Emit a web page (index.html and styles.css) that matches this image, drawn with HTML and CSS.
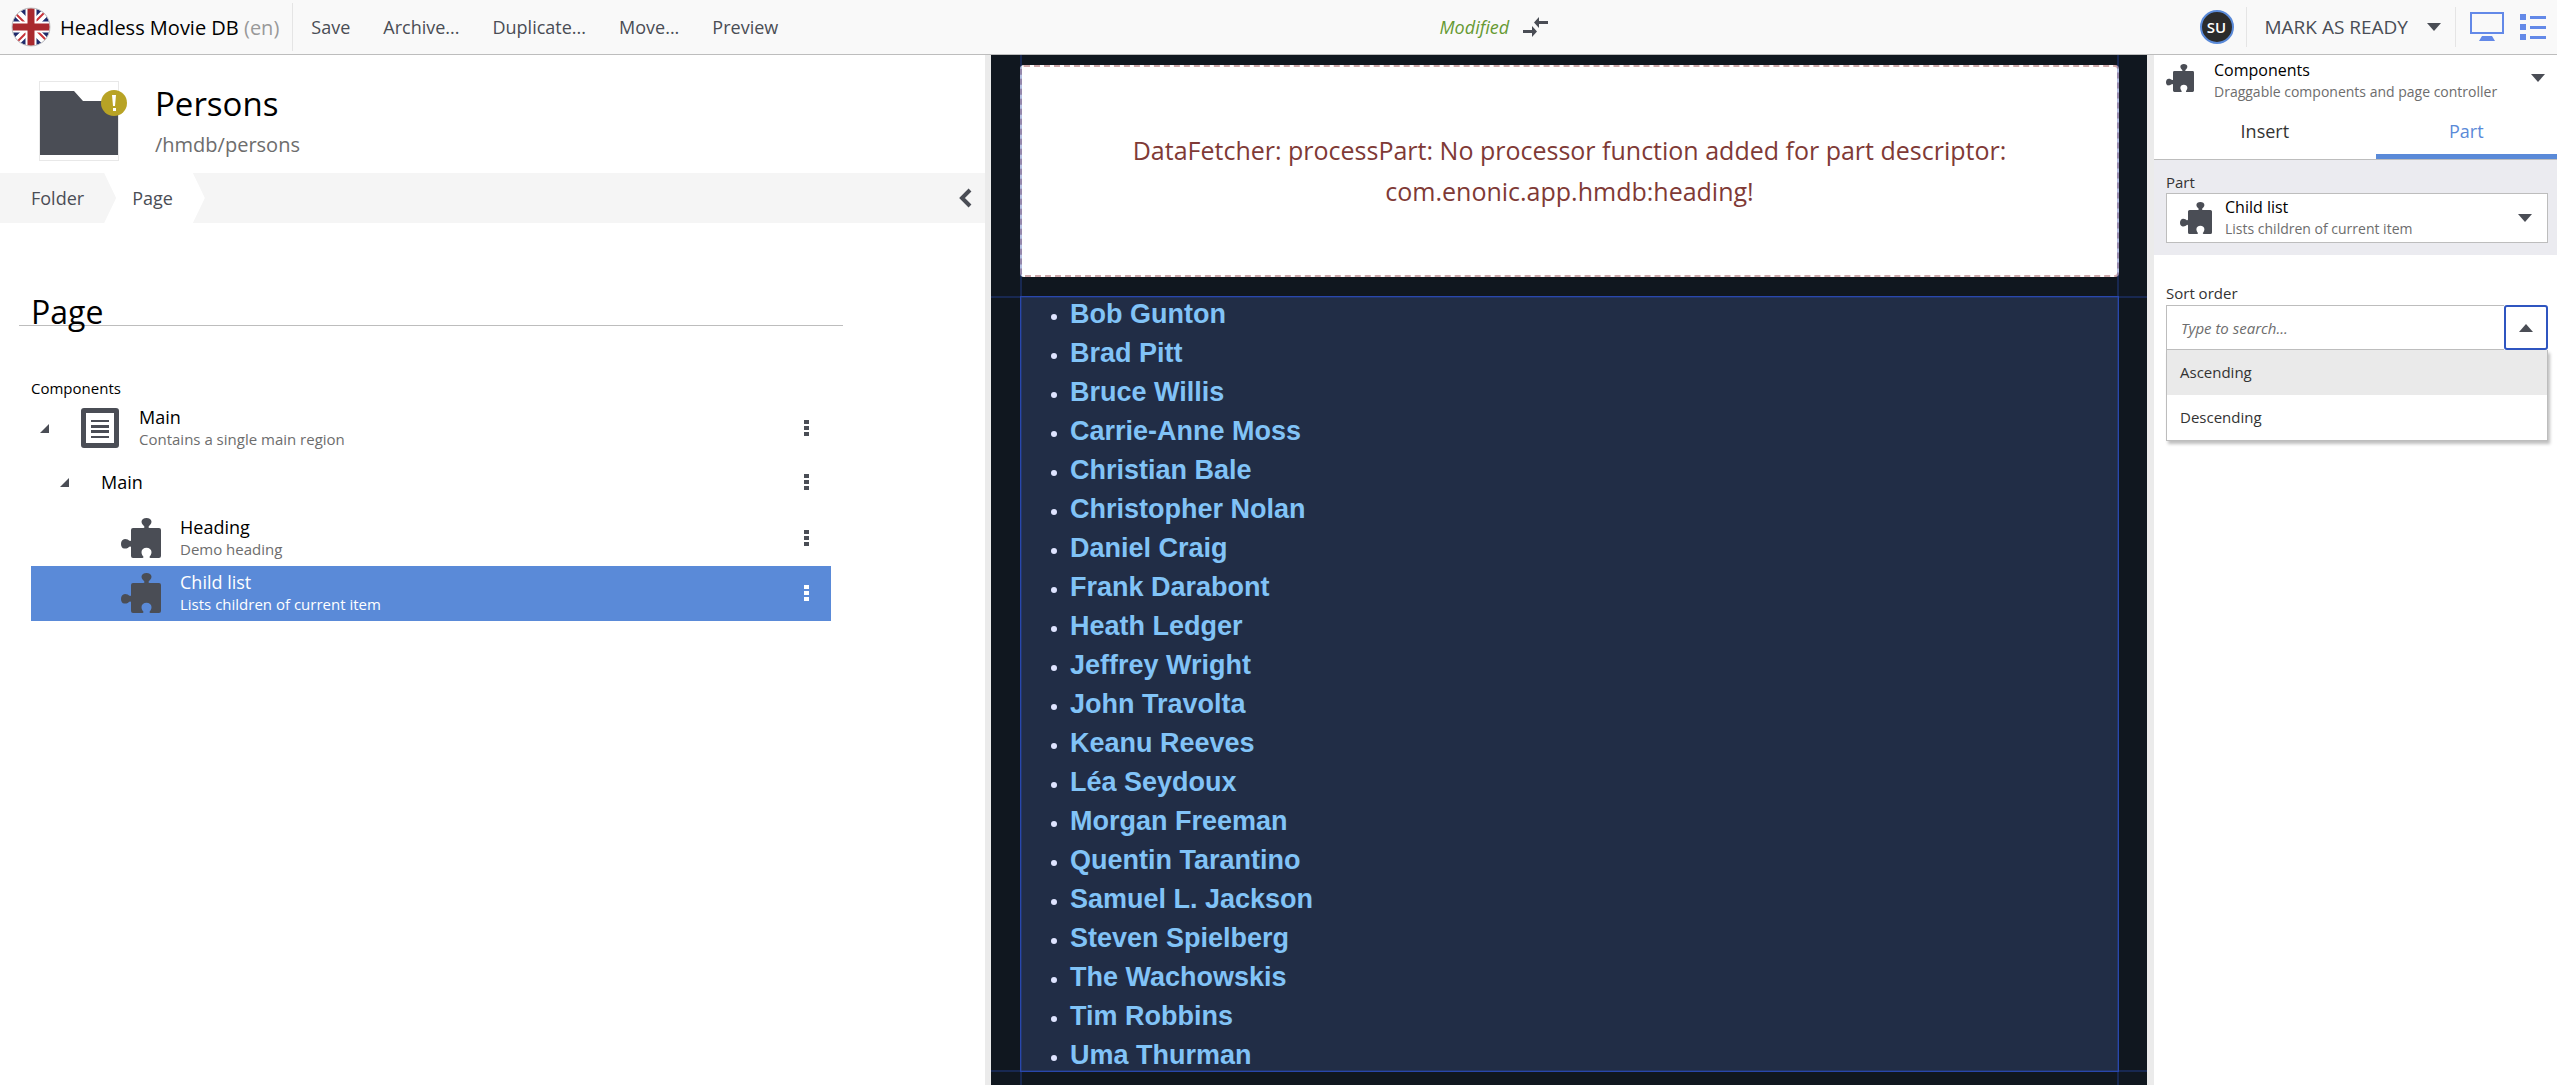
FILE: index.html
```html
<!DOCTYPE html>
<html lang="en">
<head>
<meta charset="utf-8">
<meta name="viewport" content="width=device-width, initial-scale=1">
<title>Persons - Headless Movie DB</title>
<link rel="stylesheet" href="styles.css">
</head>
<body>
<svg class="sprite" aria-hidden="true">
  <symbol id="puzzle" viewBox="0 0 40 40">
    <path d="M12 10h10.500c.8 0 1.200-.8.8-1.500C22.500 7.500 20.500 6 20.500 3.800 20.500 1.500 22.700 0 25.500 0s5 1.500 5 3.800c0 2.200-2 3.700-2.800 4.700-.4.7 0 1.500.8 1.500H38a2 2 0 0 1 2 2v26a2 2 0 0 1-2 2h-8.500c-.8 0-1.200-.8-.8-1.500.8-1 1.800-2.500 1.800-4.500 0-2.600-2.200-4.200-5-4.200s-5 1.600-5 4.200c0 2 1 3.500 1.800 4.500.4.7 0 1.500-.8 1.500H12a2 2 0 0 1-2-2v-8.500c0-.8-.8-1.200-1.500-.8-1 .8-2.300 1.800-4.500 1.800C1.500 31 0 28.800 0 26s1.500-5 4-5c2.200 0 3.500 1 4.500 1.800.7.4 1.500 0 1.500-.8V12a2 2 0 0 1 2-2z"/>
  </symbol>
  <symbol id="caret" viewBox="0 0 14 8"><path d="M0 0h14L7 8z"/></symbol>
  <symbol id="dots" viewBox="0 0 5 16"><path d="M0 0h5v4H0zM0 6h5v4H0zM0 12h5v4H0z"/></symbol>
  <symbol id="toggle" viewBox="0 0 9 9"><path d="M9 0v9H0z"/></symbol>
</svg>

<header class="toolbar">
  <a class="brand" href="#">
    <svg class="flag" viewBox="0 0 40 40" aria-hidden="true">
      <defs><clipPath id="disc"><circle cx="20" cy="20" r="19"/></clipPath></defs>
      <g clip-path="url(#disc)">
        <path fill="#1f2a6b" d="M0 0h40v40H0z"/>
        <path stroke="#fff" stroke-width="8" d="M2 2l36 36M38 2L2 38"/>
        <path stroke="#c8343a" stroke-width="2" d="M4 6l12 12M36 34L24 22M35 4L22 17M5 36l13-13"/>
        <path stroke="#fff" stroke-width="11" d="M20 0v40M0 20h40"/>
        <path stroke="#a9292e" stroke-width="7" d="M20 0v40M0 20h40"/>
      </g>
      <circle cx="20" cy="20" r="19" fill="none" stroke="#c4c4c4"/>
    </svg>
    <span>Headless Movie DB <span class="lang">(en)</span></span>
  </a>
  <nav class="actions">
    <button>Save</button>
    <button>Archive...</button>
    <button>Duplicate...</button>
    <button>Move...</button>
    <button>Preview</button>
  </nav>
  <div class="status">
    <span>Modified</span>
    <button aria-label="Compare versions">
      <svg width="25" height="20" viewBox="0 0 25 20"><path d="M0 13h9V9l5 5.500L9 20v-4H0zM25 4h-9V0l-5 5.500 5 5.500V7h9z"/></svg>
    </button>
  </div>
  <div class="avatar">SU</div>
  <div class="publish">
    <button>MARK AS READY</button>
    <button aria-label="More publish actions"><svg class="caret"><use href="#caret"/></svg></button>
  </div>
  <div class="views">
    <button aria-label="Desktop preview">
      <svg width="34" height="30" viewBox="0 0 34 30"><path fill-rule="evenodd" d="M0 0h34v22H0zM2 2v18h30V2zM12 24h10l3 5H9z"/></svg>
    </button>
    <button aria-label="Components view">
      <svg width="26" height="26" viewBox="0 0 26 26"><path d="M0 0h6v6H0zM0 10h6v6H0zM0 20h6v6H0zM10 2h16v3H10zM10 12h16v3H10zM10 22h16v3H10z"/></svg>
    </button>
  </div>
</header>

<main class="workspace">
  <section class="editor">
    <div class="content-head">
      <div class="thumb">
        <svg viewBox="0 0 78 78" aria-hidden="true"><path d="M0 9h34l9 10h35v54H0z"/></svg>
        <span class="alert">
          <svg viewBox="0 0 26 26" aria-hidden="true"><circle cx="13" cy="13" r="13" fill="#b8a325"/><path fill="#fff" d="M11 5h4l-1 11h-2zM12 18h3v3h-3z"/></svg>
        </span>
      </div>
      <div>
        <h1>Persons</h1>
        <p class="path">/hmdb/persons</p>
      </div>
    </div>
    <nav class="steps">
      <a class="step" href="#">Folder</a>
      <a class="step current" href="#">Page</a>
      <button class="collapse" aria-label="Collapse panel">
        <svg width="13" height="20" viewBox="0 0 13 20"><path d="M11 2l-8 8 8 8" fill="none" stroke="#4a4d55" stroke-width="4"/></svg>
      </button>
    </nav>
    <div class="form">
      <h2>Page</h2>
      <h3>Components</h3>
      <ul class="tree">
        <li class="row level-1">
          <button class="toggle" aria-label="Collapse Main"><svg><use href="#toggle"/></svg></button>
          <svg class="icon" viewBox="0 0 40 40" aria-hidden="true"><path fill-rule="evenodd" d="M4 0h32a3 3 0 0 1 3 3v34a3 3 0 0 1-3 3H4a3 3 0 0 1-3-3V3a3 3 0 0 1 3-3zM6 5v30h28V5zM11 12h18v2H11zM11 17h18v3H11zM11 22h18v3H11zM11 28h18v2H11z"/></svg>
          <div class="label"><strong>Main</strong><small>Contains a single main region</small></div>
          <button class="menu" aria-label="Main menu"><svg><use href="#dots"/></svg></button>
        </li>
        <li class="row level-2">
          <button class="toggle" aria-label="Collapse Main region"><svg><use href="#toggle"/></svg></button>
          <div class="label"><strong>Main</strong></div>
          <button class="menu" aria-label="Main region menu"><svg><use href="#dots"/></svg></button>
        </li>
        <li class="row level-3">
          <svg class="icon" aria-hidden="true"><use href="#puzzle"/></svg>
          <div class="label"><strong>Heading</strong><small>Demo heading</small></div>
          <button class="menu" aria-label="Heading menu"><svg><use href="#dots"/></svg></button>
        </li>
        <li class="row level-3 selected">
          <svg class="icon" aria-hidden="true"><use href="#puzzle"/></svg>
          <div class="label"><strong>Child list</strong><small>Lists children of current item</small></div>
          <button class="menu" aria-label="Child list menu"><svg><use href="#dots"/></svg></button>
        </li>
      </ul>
    </div>
  </section>

  <div class="splitter"></div>

  <section class="preview">
    <div class="error">DataFetcher: processPart: No processor function added for part descriptor:<br>com.enonic.app.hmdb:heading!</div>
    <div class="child-list">
      <ul>
        <li><a href="#">Bob Gunton</a></li>
        <li><a href="#">Brad Pitt</a></li>
        <li><a href="#">Bruce Willis</a></li>
        <li><a href="#">Carrie-Anne Moss</a></li>
        <li><a href="#">Christian Bale</a></li>
        <li><a href="#">Christopher Nolan</a></li>
        <li><a href="#">Daniel Craig</a></li>
        <li><a href="#">Frank Darabont</a></li>
        <li><a href="#">Heath Ledger</a></li>
        <li><a href="#">Jeffrey Wright</a></li>
        <li><a href="#">John Travolta</a></li>
        <li><a href="#">Keanu Reeves</a></li>
        <li><a href="#">Léa Seydoux</a></li>
        <li><a href="#">Morgan Freeman</a></li>
        <li><a href="#">Quentin Tarantino</a></li>
        <li><a href="#">Samuel L. Jackson</a></li>
        <li><a href="#">Steven Spielberg</a></li>
        <li><a href="#">The Wachowskis</a></li>
        <li><a href="#">Tim Robbins</a></li>
        <li><a href="#">Uma Thurman</a></li>
      </ul>
    </div>
  </section>

  <div class="splitter"></div>

  <aside class="inspector">
    <button class="widget">
      <svg class="widget-icon" aria-hidden="true"><use href="#puzzle"/></svg>
      <span class="label"><strong>Components</strong><small>Draggable components and page controller</small></span>
      <svg class="caret"><use href="#caret"/></svg>
    </button>
    <div class="tabs" role="tablist">
      <button role="tab" class="tab-insert">Insert</button>
      <button role="tab" class="tab-part" aria-selected="true">Part</button>
    </div>
    <div class="part-field">
      <label for="part">Part</label>
      <button class="part-select" id="part">
        <svg class="part-icon" aria-hidden="true"><use href="#puzzle"/></svg>
        <span class="label"><strong>Child list</strong><small>Lists children of current item</small></span>
        <svg class="caret"><use href="#caret"/></svg>
      </button>
    </div>
    <div class="sort-field">
      <label for="sort">Sort order</label>
      <div class="combo">
        <input id="sort" type="text" placeholder="Type to search...">
        <button aria-label="Close options" aria-expanded="true"><svg class="caret up"><use href="#caret"/></svg></button>
      </div>
      <ul class="options" role="listbox">
        <li role="option" class="active">Ascending</li>
        <li role="option">Descending</li>
      </ul>
    </div>
  </aside>
</main>
</body>
</html>
```
FILE: styles.css
```css
* {
  box-sizing: border-box;
}

body {
  margin: 0;
  min-height: 100vh;
  display: flex;
  flex-direction: column;
  background: #fff;
  color: #000;
  font-family: "Open Sans", "Noto Sans", sans-serif;
  font-size: 18px;
}

h1, h2, h3, p, ul {
  margin: 0;
  padding: 0;
  font-weight: 400;
}

ul {
  list-style: none;
}

a {
  color: inherit;
  text-decoration: none;
}

button {
  margin: 0;
  padding: 0;
  border: 0;
  background: none;
  color: inherit;
  font: inherit;
}

svg {
  display: block;
  flex: none;
  fill: #4a4d55;
}

.sprite {
  position: absolute;
  width: 0;
  height: 0;
}

.caret {
  width: 14px;
  height: 8px;
}

.caret.up {
  rotate: 180deg;
}

.label {
  display: flex;
  flex-direction: column;
  flex: 1;
  text-align: left;
}

.label strong {
  font-weight: 400;
}

.label small {
  color: #6d6d6d;
}

/* Top toolbar */

.toolbar {
  display: flex;
  align-items: center;
  height: 55px;
  padding: 0 11px;
  border-bottom: 1px solid #bdbdbd;
  background: #f9f9f9;
  color: #4a4d55;
}

.brand {
  display: flex;
  align-items: center;
  gap: 9px;
  height: 48px;
  padding-right: 13px;
  border-right: 1px solid #e5e5e5;
  color: #000;
  font-size: 20px;
}

.flag {
  width: 40px;
  height: 40px;
}

.lang {
  color: #999;
}

.actions {
  display: flex;
  gap: 33px;
  padding: 0 10px 0 18px;
}

.status {
  display: flex;
  align-items: center;
  gap: 14px;
  margin: 0 auto;
  color: #669933;
  font-style: italic;
}

.avatar {
  display: grid;
  place-items: center;
  width: 34px;
  height: 34px;
  border: 2px solid #5a8ad8;
  border-radius: 50%;
  background: #2b2b2b;
  color: #fff;
  font-size: 15px;
  font-weight: 600;
}

.publish {
  display: flex;
  align-items: center;
  gap: 19px;
  height: 40px;
  margin-left: 12px;
  padding: 0 14px 0 18px;
  border: solid #e5e5e5;
  border-width: 0 1px;
  font-size: 19px;
}

.views {
  display: flex;
  align-items: center;
  gap: 16px;
  padding-left: 14px;
}

.views svg {
  fill: #6389e8;
}

/* Workspace columns */

.workspace {
  flex: 1;
  display: grid;
  grid-template-columns: minmax(0, 985fr) 6px minmax(0, 1156fr) 7px minmax(0, 403fr);
}

.splitter {
  background: #ebebeb;
}

/* Content editor */

.content-head {
  display: flex;
  gap: 36px;
  padding: 26px 39px 12px;
}

.thumb {
  position: relative;
  width: 80px;
  height: 80px;
  border: 1px solid #e8e8e8;
}

.alert {
  position: absolute;
  top: 8px;
  right: -9px;
  width: 26px;
}

h1 {
  padding-top: 6px;
  font-size: 33px;
  line-height: 34px;
}

.path {
  padding-top: 8px;
  color: #6d6d6d;
  font-size: 20px;
  line-height: 32px;
}

.steps {
  display: flex;
  height: 50px;
  background: #f5f5f5;
  color: #4a4d55;
  line-height: 50px;
}

.step {
  padding: 0 32px 0 31px;
}

.step.current {
  padding: 0 32px 0 28px;
  margin-left: -12px;
  background: #fff;
  clip-path: polygon(0 0, calc(100% - 12px) 0, 100% 50%, calc(100% - 12px) 100%, 0 100%, 12px 50%);
}

.collapse {
  margin-left: auto;
  padding: 0 13px;
}

.form {
  width: 843px;
  max-width: 100%;
  padding: 68px 0 0 19px;
}

h2 {
  height: 35px;
  padding-left: 12px;
  border-bottom: 1px solid #bdbdbd;
  font-size: 32px;
  line-height: 42px;
}

h3 {
  padding: 51px 12px 0;
  font-size: 15px;
  line-height: 22px;
}

.tree {
  padding: 2px 12px 0;
}

.row {
  display: flex;
  align-items: center;
  height: 55px;
  padding: 0 22px 1px 0;
}

.level-1 {
  padding-left: 9px;
}

.level-2 {
  padding-left: 29px;
  padding-bottom: 3px;
}

.level-3 {
  padding-left: 90px;
}

.toggle {
  width: 40px;
  flex: none;
}

.level-2 .toggle {
  width: 41px;
}

.toggle svg {
  width: 9px;
  height: 9px;
}

.icon {
  width: 40px;
  height: 40px;
}

.icon + .label {
  padding-left: 19px;
}

.row .label strong {
  line-height: 22px;
}

.row .label small {
  font-size: 15px;
  line-height: 22px;
}

.menu svg {
  width: 5px;
  height: 16px;
}

.selected {
  background: #5a8ad8;
}

.selected .label,
.selected .label small {
  color: #fff;
}

.selected .menu svg {
  fill: #fff;
}

/* Live preview */

.preview {
  overflow: hidden;
  padding: 10px 28px 14px 29px;
  background: #10171f;
}

.error {
  padding: 63px 20px;
  border: 2px dashed #cfa9ab;
  border-radius: 4px;
  background: #fff;
  color: #7f3a36;
  font-size: 25px;
  line-height: 41px;
  text-align: center;
}

.child-list {
  position: relative;
  height: 776px;
  margin-top: 19px;
  border: 1px solid #2a48ac;
  background: #212d46;
}

/* Guides that extend the selected component's edges */
.child-list::before,
.child-list::after {
  content: "";
  position: absolute;
  z-index: 1;
  pointer-events: none;
}

.child-list::before {
  inset: -1px -40px;
  border: solid rgba(40, 72, 172, .35);
  border-width: 2px 0;
}

.child-list::after {
  inset: -300px -1px;
  border: solid rgba(40, 72, 172, .35);
  border-width: 0 2px;
}

.child-list ul {
  margin-top: -2px;
  padding-left: 49px;
  list-style: disc;
  color: #dfe4ff;
  font-family: "Liberation Sans", Arial, sans-serif;
  font-size: 20px;
  line-height: 39px;
}

.child-list li {
  height: 39px;
}

.child-list a {
  color: #81c3f7;
  font-size: 27px;
  font-weight: 700;
}

/* Inspector */

.inspector strong {
  font-size: 16px;
  line-height: 21px;
}

.inspector small {
  font-size: 14px;
  line-height: 21px;
}

.widget {
  display: flex;
  align-items: center;
  width: 100%;
  height: 52px;
  padding: 0 12px;
}

.widget svg {
  margin-bottom: 6px;
}

.widget-icon {
  width: 28px;
  height: 28px;
}

.widget .label {
  padding-left: 20px;
}

.widget .label,
.part-select .label {
  color: #000;
}

.tabs {
  display: flex;
  height: 53px;
  border-bottom: 1px solid #bdbdbd;
  color: #333;
}

.tabs button {
  padding-bottom: 5px;
}

.tab-insert {
  flex: 11;
}

.tab-part {
  flex: 9;
}

.tabs .tab-part {
  padding: 0;
  border: solid #5a8ad8;
  border-width: 0 0 5px;
  color: #5a8ad8;
}

.part-field {
  padding: 11px 9px 12px 12px;
  background: #ebebf0;
}

.inspector label {
  display: block;
  color: #333;
  font-size: 15px;
  line-height: 22px;
}

.part-select {
  display: flex;
  align-items: center;
  width: 100%;
  height: 50px;
  padding: 0 15px 0 13px;
  border: 1px solid #bdbdbd;
  background: #fff;
}

.part-icon {
  width: 32px;
  height: 32px;
}

.part-select .label {
  padding-left: 13px;
}

.sort-field {
  padding: 27px 9px 0 12px;
}

.combo {
  display: flex;
  height: 45px;
  margin-top: 1px;
}

.combo input {
  flex: 1;
  min-width: 0;
  padding: 0 14px;
  border: 1px solid #bdbdbd;
  border-right: 0;
  background: #fff;
  font: italic 15px "Open Sans", "Noto Sans", sans-serif;
}

.combo input::placeholder {
  color: #6d6d6d;
  opacity: 1;
}

.combo button {
  display: grid;
  place-items: center;
  width: 44px;
  border: 2px solid #2f55c0;
  border-radius: 3px;
}

.options {
  border: 1px solid #bdbdbd;
  border-top: 0;
  background: #fff;
  box-shadow: 2px 3px 3px rgba(0, 0, 0, .25);
  color: #333;
  font-size: 15px;
  line-height: 45px;
}

.options li {
  padding: 0 13px;
}

.options .active {
  background: #eaeaea;
}
```
